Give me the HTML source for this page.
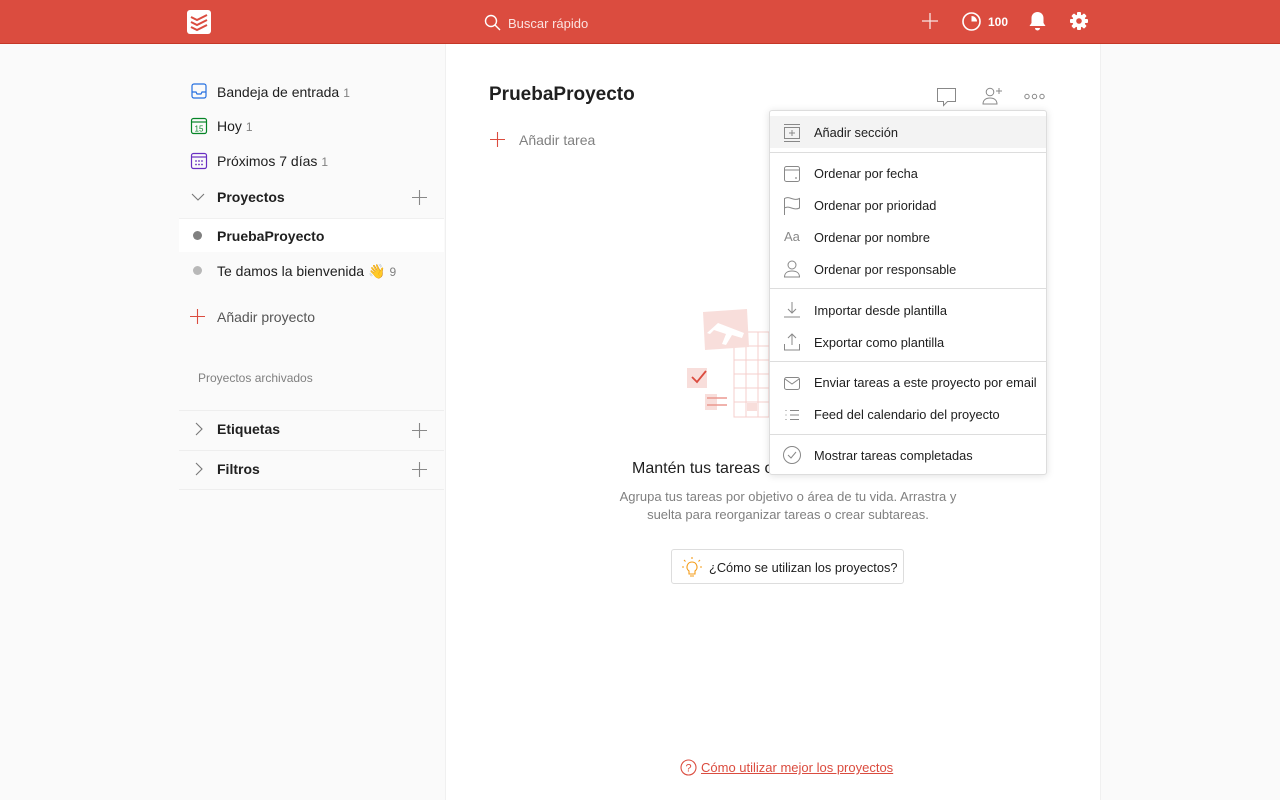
<!DOCTYPE html>
<html><head><meta charset="utf-8"><style>
*{box-sizing:border-box;margin:0;padding:0}
body{width:1280px;height:800px;overflow:hidden;background:#fafafa;font-family:"Liberation Sans",sans-serif;color:#202020;position:relative}
.hdr{position:absolute;left:0;top:0;width:1280px;height:44px;background:#db4c3f;border-bottom:1px solid #c53727}
.abs{position:absolute}
.main{position:absolute;left:445px;top:44px;width:656px;height:756px;background:#fff;border-left:1px solid #f0f0f0;border-right:1px solid #f0f0f0}
.si{position:absolute;left:217px;font-size:14px;color:#202020}
.cnt{color:#808080;font-size:12px;margin-left:4px}
.menu{position:absolute;left:769px;top:110px;width:278px;height:365px;background:#fff;border:1px solid #ddd;border-radius:3px;box-shadow:0 1px 8px rgba(0,0,0,.12)}
.mi{position:absolute;left:44px;font-size:12.8px;color:#202020}
.sep{position:absolute;left:0;width:276px;height:1px;background:#ddd}
.ic{position:absolute;left:12px}
</style></head><body>
<div class="hdr">
<svg class="abs" style="left:187px;top:10px" width="24" height="24" viewBox="0 0 24 24"><rect width="24" height="24" rx="3" fill="#fff"/><path d="M4 7l6 3 10-5M4 12l6 3 10-5M4 17l6 3 10-5" stroke="#db4c3f" stroke-width="2" fill="none"/></svg>
<svg class="abs" style="left:484px;top:14px" width="17" height="17" viewBox="0 0 17 17"><circle cx="7" cy="7" r="5.5" stroke="#fff" stroke-width="1.4" fill="none"/><path d="M11 11l5 5" stroke="#fff" stroke-width="1.4"/></svg>
<div class="abs" style="left:508px;top:16px;font-size:13px;color:#fbe3e1">Buscar rápido</div>
<svg class="abs" style="left:921px;top:12px" width="18" height="18"><path d="M9 1v16M1 9h16" stroke="#fff" stroke-width="1.3" opacity=".85"/></svg>
<svg class="abs" style="left:961px;top:11px" width="21" height="21" viewBox="0 0 21 21"><circle cx="10.5" cy="10.5" r="8.5" stroke="#fff" stroke-width="1.6" fill="none"/><path d="M10.5 5v5.5h5.5A5.5 5.5 0 0 0 10.5 5z" fill="#fff"/></svg>
<div class="abs" style="left:988px;top:15px;font-size:12px;font-weight:bold;color:#fff">100</div>
<svg class="abs" style="left:1028px;top:11px" width="19" height="20" viewBox="0 0 19 20"><path d="M9.5 1c-3.5 0-6 2.5-6 6v5l-2 3h16l-2-3V7c0-3.5-2.5-6-6-6z" fill="#fff"/><path d="M7 17a2.5 2.5 0 0 0 5 0z" fill="#fff"/></svg>
<svg class="abs" style="left:1069px;top:11px" width="20" height="20" viewBox="0 0 20 20"><g fill="#fff"><circle cx="10" cy="10" r="6.5"/><rect x="8" y="1" width="4" height="18" rx="1"/><rect x="1" y="8" width="18" height="4" rx="1"/><rect x="8" y="1" width="4" height="18" rx="1" transform="rotate(45 10 10)"/><rect x="8" y="1" width="4" height="18" rx="1" transform="rotate(-45 10 10)"/></g><circle cx="10" cy="10" r="2.8" fill="#db4c3f"/></svg>
</div>

<svg class="abs" style="left:190px;top:82px" width="18" height="18" viewBox="0 0 18 18"><path d="M2 4a2 2 0 0 1 2-2h10a2 2 0 0 1 2 2v10a2 2 0 0 1-2 2H4a2 2 0 0 1-2-2z M2 10h4l1 2h4l1-2h4" stroke="#246fe0" stroke-width="1.2" fill="none"/></svg>
<div class="si" style="top:84px">Bandeja de entrada<span class="cnt">1</span></div>
<svg class="abs" style="left:190px;top:117px" width="18" height="18" viewBox="0 0 18 18"><rect x="1.5" y="1.5" width="15" height="15" rx="2" stroke="#058527" stroke-width="1.2" fill="none"/><path d="M1.5 5h15" stroke="#058527" stroke-width="1.2"/><text x="9" y="14.5" font-size="8" text-anchor="middle" fill="#058527" font-family="Liberation Sans">15</text></svg>
<div class="si" style="top:118px">Hoy<span class="cnt">1</span></div>
<svg class="abs" style="left:190px;top:152px" width="18" height="18" viewBox="0 0 18 18"><rect x="1.5" y="1.5" width="15" height="15" rx="2" stroke="#692fc2" stroke-width="1.2" fill="none"/><path d="M1.5 5h15" stroke="#692fc2" stroke-width="1.2"/><g fill="#692fc2"><circle cx="6" cy="9" r=".9"/><circle cx="9" cy="9" r=".9"/><circle cx="12" cy="9" r=".9"/><circle cx="6" cy="12.5" r=".9"/><circle cx="9" cy="12.5" r=".9"/><circle cx="12" cy="12.5" r=".9"/></g></svg>
<div class="si" style="top:153px">Próximos 7 días<span class="cnt">1</span></div>
<svg class="abs" style="left:191px;top:192px" width="14" height="10"><path d="M1 2l6 6 6-6" stroke="#777" stroke-width="1.1" fill="none"/></svg>
<div class="si" style="top:189px;font-weight:bold">Proyectos</div>
<svg class="abs" style="left:412px;top:190px" width="15" height="15"><path d="M7.5 0v15M0 7.5h15" stroke="#888" stroke-width="1.1"/></svg>
<div class="abs" style="left:179px;top:218px;width:265px;height:34px;background:#fff;border-top:1px solid #f0f0f0"></div>
<div class="abs" style="left:193px;top:231px;width:9px;height:9px;border-radius:50%;background:#808080"></div>
<div class="si" style="top:228px;font-weight:bold">PruebaProyecto</div>
<div class="abs" style="left:193px;top:266px;width:9px;height:9px;border-radius:50%;background:#b8b8b8"></div>
<div class="si" style="top:263px">Te damos la bienvenida <span style="color:#f5b800">👋</span><span class="cnt">9</span></div>
<svg class="abs" style="left:190px;top:309px" width="15" height="15"><path d="M7.5 0v15M0 7.5h15" stroke="#db4c3f" stroke-width="1.1"/></svg>
<div class="si" style="top:309px;color:#555">Añadir proyecto</div>
<div class="abs" style="left:198px;top:371px;font-size:12px;color:#808080">Proyectos archivados</div>
<div class="abs" style="left:179px;top:410px;width:265px;height:1px;background:#eee"></div>
<div class="abs" style="left:179px;top:450px;width:265px;height:1px;background:#eee"></div>
<div class="abs" style="left:179px;top:489px;width:265px;height:1px;background:#eee"></div>
<svg class="abs" style="left:194px;top:422px" width="10" height="14"><path d="M2 1l6 6-6 6" stroke="#777" stroke-width="1.1" fill="none"/></svg>
<div class="si" style="top:421px;font-weight:bold">Etiquetas</div>
<svg class="abs" style="left:412px;top:423px" width="15" height="15"><path d="M7.5 0v15M0 7.5h15" stroke="#888" stroke-width="1.1"/></svg>
<svg class="abs" style="left:194px;top:462px" width="10" height="14"><path d="M2 1l6 6-6 6" stroke="#777" stroke-width="1.1" fill="none"/></svg>
<div class="si" style="top:461px;font-weight:bold">Filtros</div>
<svg class="abs" style="left:412px;top:462px" width="15" height="15"><path d="M7.5 0v15M0 7.5h15" stroke="#888" stroke-width="1.1"/></svg>

<div class="main"></div>
<div class="abs" style="left:489px;top:84px;font-size:19px;font-weight:bold;color:#202020">PruebaProyecto</div>
<svg class="abs" style="left:936px;top:87px" width="21" height="20" viewBox="0 0 21 20"><path d="M1.5 1.5h18v13h-8l-4 4v-4h-6z" stroke="#888" stroke-width="1" fill="none"/></svg>
<svg class="abs" style="left:982px;top:87px" width="21" height="18" viewBox="0 0 21 18"><circle cx="8" cy="5" r="3.8" stroke="#888" stroke-width="1" fill="none"/><path d="M1 17c0-4 3-6 7-6s7 2 7 6z" stroke="#888" stroke-width="1" fill="none"/><path d="M17 1v6M14 4h6" stroke="#888" stroke-width="1"/></svg>
<svg class="abs" style="left:1024px;top:93px" width="21" height="7"><g stroke="#888" fill="none"><circle cx="3" cy="3.5" r="2.2"/><circle cx="10.5" cy="3.5" r="2.2"/><circle cx="18" cy="3.5" r="2.2"/></g></svg>
<svg class="abs" style="left:490px;top:132px" width="15" height="15"><path d="M7.5 0v15M0 7.5h15" stroke="#db4c3f" stroke-width="1.1"/></svg>
<div class="abs" style="left:519px;top:132px;font-size:14px;color:#808080">Añadir tarea</div>

<svg class="abs" style="left:685px;top:308px" width="90" height="115" viewBox="0 0 90 115">
<g stroke="#f5cfcc" stroke-width="1" fill="#fff"><rect x="49" y="24" width="35" height="85"/><path d="M49 38h35M49 52h35M49 66h35M49 80h35M49 94h35M61 24v85M73 24v85"/></g>
<path d="M18 4l44 -3 2 38-44 3z" fill="#f8dedb"/>
<path d="M33 15l26 10-2 5-10-3-6 10-4-1 4-10-12-4-4 4-3-1z" fill="#fff"/>
<rect x="2" y="60" width="20" height="20" fill="#f8dedb"/><path d="M7 69l5 5 9-11" stroke="#db4c3f" stroke-width="1.8" fill="none"/>
<rect x="20" y="86" width="12" height="16" fill="#f8dedb"/><path d="M22 90h20M22 97h20" stroke="#eb9990" stroke-width="1.5"/>
<rect x="62" y="95" width="10" height="8" fill="#f8dedb"/>
</svg>

<div class="abs" style="left:632px;top:460px;font-size:16px;color:#202020">Mantén tus tareas o</div>
<div class="abs" style="left:605px;top:488px;width:366px;text-align:center;font-size:13px;line-height:18px;color:#808080">Agrupa tus tareas por objetivo o área de tu vida. Arrastra y suelta para reorganizar tareas o crear subtareas.</div>
<div class="abs" style="left:671px;top:549px;width:233px;height:35px;border:1px solid #ddd;border-radius:3px;background:#fff"></div>
<svg class="abs" style="left:681px;top:556px" width="22" height="22" viewBox="0 0 22 22"><g stroke="#f49c18" stroke-width="1.1" fill="none"><path d="M11 6a5 5 0 0 0-3 9v3h6v-3a5 5 0 0 0-3-9z"/><path d="M9 20h4M11 1v2M3 4l1.5 1.5M19 4l-1.5 1.5M1 11h2M19 11h2"/></g></svg>
<div class="abs" style="left:709px;top:560px;font-size:12.8px;color:#202020">¿Cómo se utilizan los proyectos?</div>

<svg class="abs" style="left:680px;top:759px" width="17" height="17" viewBox="0 0 17 17"><circle cx="8.5" cy="8.5" r="7.5" stroke="#db4c3f" stroke-width="1.1" fill="none"/><text x="8.5" y="12.5" font-size="11" text-anchor="middle" fill="#db4c3f" font-family="Liberation Sans">?</text></svg>
<div class="abs" style="left:701px;top:760px;font-size:13px;color:#db4c3f;text-decoration:underline">Cómo utilizar mejor los proyectos</div>

<div class="menu">
<div class="abs" style="left:0;top:5px;width:276px;height:32px;background:#f3f3f3"></div>
<svg class="ic" style="top:12px" width="20" height="20" viewBox="0 0 20 20"><g stroke="#888" stroke-width="1" fill="none"><path d="M2 1.5h16M2 18.5h16"/><rect x="2.5" y="4.5" width="15" height="11"/><path d="M10 7v6M7 10h6"/></g></svg>
<div class="mi" style="top:14px">Añadir sección</div>
<div class="sep" style="top:41px"></div>
<svg class="ic" style="top:53px" width="20" height="20" viewBox="0 0 20 20"><g stroke="#888" stroke-width="1" fill="none"><rect x="2.5" y="2.5" width="15" height="15" rx="2"/><path d="M2.5 6h15"/></g><circle cx="14" cy="14" r=".9" fill="#888"/></svg>
<div class="mi" style="top:55px">Ordenar por fecha</div>
<svg class="ic" style="top:85px" width="20" height="20" viewBox="0 0 20 20"><path d="M2.5 19V2.5c5-3 9 3 15 0V12c-6 3-10-3-15 0" stroke="#888" stroke-width="1" fill="none"/></svg>
<div class="mi" style="top:87px">Ordenar por prioridad</div>
<div class="abs" style="left:14px;top:118px;font-size:13px;color:#888">Aa</div>
<div class="mi" style="top:119px">Ordenar por nombre</div>
<svg class="ic" style="top:148px" width="20" height="20" viewBox="0 0 20 20"><g stroke="#888" stroke-width="1" fill="none"><circle cx="10" cy="6" r="4"/><path d="M2.5 18c0-4 3-6 7.5-6s7.5 2 7.5 6z"/></g></svg>
<div class="mi" style="top:151px">Ordenar por responsable</div>
<div class="sep" style="top:177px"></div>
<svg class="ic" style="top:189px" width="20" height="20" viewBox="0 0 20 20"><g stroke="#888" stroke-width="1" fill="none"><path d="M10 2v11M6 9l4 4 4-4M2 17h16"/></g></svg>
<div class="mi" style="top:192px">Importar desde plantilla</div>
<svg class="ic" style="top:221px" width="20" height="20" viewBox="0 0 20 20"><g stroke="#888" stroke-width="1" fill="none"><path d="M10 13V2M6 6l4-4 4 4M2.5 12v6h15v-6"/></g></svg>
<div class="mi" style="top:224px">Exportar como plantilla</div>
<div class="sep" style="top:250px"></div>
<svg class="ic" style="top:262px" width="20" height="20" viewBox="0 0 20 20"><g stroke="#888" stroke-width="1" fill="none"><rect x="2.5" y="4.5" width="15" height="12" rx="2"/><path d="M3 6l7 5 7-5"/></g></svg>
<div class="mi" style="top:264px">Enviar tareas a este proyecto por email</div>
<svg class="ic" style="top:294px" width="20" height="20" viewBox="0 0 20 20"><g stroke="#888" stroke-width="1" fill="none"><path d="M4 5v1M4 9.5v1M4 14v1M8 5.5h9M8 10h9M8 14.5h9"/></g></svg>
<div class="mi" style="top:296px">Feed del calendario del proyecto</div>
<div class="sep" style="top:323px"></div>
<svg class="ic" style="top:334px" width="20" height="20" viewBox="0 0 20 20"><g stroke="#888" stroke-width="1" fill="none"><circle cx="10" cy="10" r="8.5"/><path d="M6 10l3 3 5-6"/></g></svg>
<div class="mi" style="top:337px">Mostrar tareas completadas</div>
</div>
</body></html>
